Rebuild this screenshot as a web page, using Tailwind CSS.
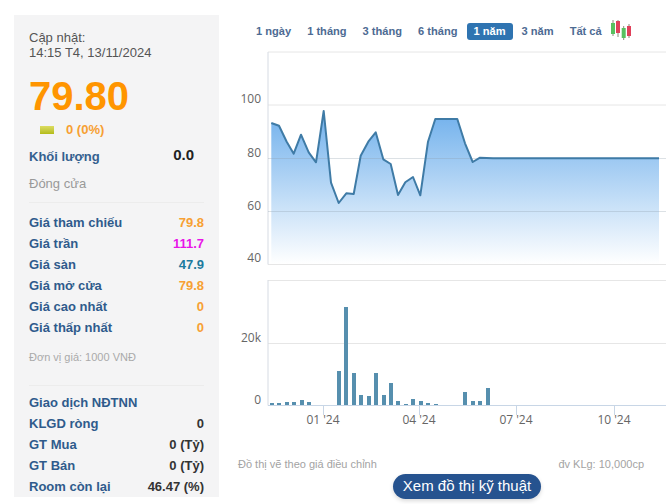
<!DOCTYPE html>
<html lang="vi">
<head>
<meta charset="utf-8">
<script src="https://cdn.jsdelivr.net/npm/@tailwindcss/browser@4"></script>
</head>
<body class="bg-white">
<div class="flex w-[667px] h-[504px] overflow-hidden bg-white font-['Liberation_Sans',Arial,sans-serif]">
  <aside class="ml-[14px] mt-[15px] w-[205px] h-[482px] shrink-0 bg-[#f4f4f5] px-[15px] pt-[15px]">
    <div class="text-[13px] leading-[15px] text-[#555]">Cập nhật:<br>14:15 T4, 13/11/2024</div>
    <div class="mt-[13px] text-[40px] leading-[46px] font-bold text-[#ff9500]">79.80</div>
    <div class="flex items-center h-[18px] mt-[2px] pl-[11px] gap-[12px]">
      <span class="block w-[14px] h-[8px] bg-gradient-to-b from-[#dcdc60] to-[#b4bc14]"></span>
      <span class="text-[13px] font-bold text-[#f7a033]">0 (0%)</span>
    </div>
    <div class="flex justify-between items-center h-[24px] mt-[6px] pr-[10px]">
      <span class="text-[13px] font-bold text-[#34608f]">Khối lượng</span>
      <span class="text-[15px] font-bold text-[#222] -mt-[3px]">0.0</span>
    </div>
    <div class="mt-[5px] text-[13px] leading-[20px] text-[#999]">Đóng cửa</div>
    <div class="mt-[8px] border-t border-[#ececec] pt-[9px] text-[13px] font-bold text-[#2f5b8c]">
      <div class="flex justify-between h-[21px] items-center"><span>Giá tham chiếu</span><span class="text-[#f7a033]">79.8</span></div>
      <div class="flex justify-between h-[21px] items-center"><span>Giá trần</span><span class="text-[#e815e8]">111.7</span></div>
      <div class="flex justify-between h-[21px] items-center"><span>Giá sàn</span><span class="text-[#1c7a9e]">47.9</span></div>
      <div class="flex justify-between h-[21px] items-center"><span>Giá mở cửa</span><span class="text-[#f7a033]">79.8</span></div>
      <div class="flex justify-between h-[21px] items-center"><span>Giá cao nhất</span><span class="text-[#f7a033]">0</span></div>
      <div class="flex justify-between h-[21px] items-center"><span>Giá thấp nhất</span><span class="text-[#f7a033]">0</span></div>
    </div>
    <div class="mt-[12px] text-[11px] leading-[14px] text-[#aaa]">Đơn vị giá: 1000 VNĐ</div>
    <div class="mt-[21px] border-t border-[#ececec] pt-[6px] text-[13px] font-bold text-[#2f5b8c]">
      <div class="flex justify-between h-[21px] items-center"><span>Giao dịch NĐTNN</span></div>
      <div class="flex justify-between h-[21px] items-center"><span>KLGD ròng</span><span class="text-[#333]">0</span></div>
      <div class="flex justify-between h-[21px] items-center"><span>GT Mua</span><span class="text-[#333]">0 (Tỷ)</span></div>
      <div class="flex justify-between h-[21px] items-center"><span>GT Bán</span><span class="text-[#333]">0 (Tỷ)</span></div>
      <div class="flex justify-between h-[21px] items-center"><span>Room còn lại</span><span class="text-[#333]">46.47 (%)</span></div>
    </div>
  </aside>
  <main class="flex-1 flex flex-col min-w-0">
    <nav class="flex items-center h-[17px] mt-[23px] ml-[30px] text-[11.1px] font-bold text-[#4d6b93]">
      <span class="px-[7px]">1 ngày</span>
      <span class="ml-[2px] px-[7px]">1 tháng</span>
      <span class="ml-[2px] px-[7px]">3 tháng</span>
      <span class="ml-[2px] px-[7px]">6 tháng</span>
      <span class="ml-[2px] px-[7px] h-[17px] leading-[17px] rounded-[3px] bg-[#2f74b1] text-white">1 năm</span>
      <span class="ml-[2px] px-[7px]">3 năm</span>
      <span class="ml-[2px] px-[7px]">Tất cả</span>
      <svg class="ml-[2px] -mt-[4px]" width="22" height="22" viewBox="0 0 22 22">
        <path d="M2 1v16M7 1v17M12.700 7v14M18 5v14" stroke="#8a8a7a" stroke-width="1"/>
        <rect x="0" y="4" width="4" height="11" fill="#58c060"/>
        <rect x="5" y="2" width="4" height="12" fill="#e0405a"/>
        <rect x="10.700" y="9" width="4" height="10" fill="#58c060"/>
        <rect x="16" y="7" width="4" height="10" fill="#e0405a"/>
      </svg>
    </nav>
    <svg class="block mt-[6px]" width="448" height="384" viewBox="219 46 448 384" font-family="'Open Sans',sans-serif" font-size="12" fill="#666">
      <defs>
        <linearGradient id="fill" x1="0" y1="111" x2="0" y2="264" gradientUnits="userSpaceOnUse">
          <stop offset="0" stop-color="#70b0ec"/>
          <stop offset="1" stop-color="#ffffff"/>
        </linearGradient>
      </defs>
      <path d="M268 52H666M268 105H666M268 264.500H666M268 280.500H666M268 343.500H666" stroke="#e6e6e6" fill="none"/>
      <path d="M268 52V264.500M268 280V405.500" stroke="#d6dbe3" fill="none"/>
      <path d="M268 405.500H666" stroke="#c8d6e6" fill="none"/>
      <path d="M271.300 123L279 125.700L286.700 141.700L293.700 153.700L301 134.700L308.700 152.300L316 162.300L323.700 111L331 182.700L338.700 203L346.300 193.300L353.700 194L360.700 155.700L368.300 141.700L375.700 132.300L383.300 159.300L390.700 164L398 195L405.300 182.300L413 177L420.300 195.300L428 141.700L435.300 119L457.300 119L465 143.300L472.700 162L480 157.700L493 158.300L659 158.300V264H271.300Z" fill="url(#fill)"/>
      <path d="M268 158.500H666M268 211.500H666" stroke="#8a9aaa" stroke-opacity="0.3" fill="none"/>
      <path d="M271.300 123L279 125.700L286.700 141.700L293.700 153.700L301 134.700L308.700 152.300L316 162.300L323.700 111L331 182.700L338.700 203L346.300 193.300L353.700 194L360.700 155.700L368.300 141.700L375.700 132.300L383.300 159.300L390.700 164L398 195L405.300 182.300L413 177L420.300 195.300L428 141.700L435.300 119L457.300 119L465 143.300L472.700 162L480 157.700L493 158.300L659 158.300" stroke="#3f7ba6" stroke-width="2" fill="none" stroke-linejoin="round"/>
      <g fill="#568fae">
        <rect x="270" y="403" width="4" height="2"/><rect x="277" y="403" width="4" height="2"/><rect x="285" y="402" width="4" height="3"/><rect x="292" y="402" width="4" height="3"/><rect x="300" y="400" width="4" height="5"/><rect x="307" y="402" width="4" height="3"/>
        <rect x="337" y="371" width="4" height="34"/><rect x="344" y="307" width="4" height="98"/><rect x="352" y="373" width="4" height="32"/><rect x="359" y="395" width="4" height="10"/><rect x="367" y="396" width="4" height="9"/><rect x="374" y="373" width="4" height="32"/><rect x="382" y="395" width="4" height="10"/><rect x="389" y="383" width="4" height="22"/><rect x="396" y="401" width="4" height="4"/><rect x="404" y="404" width="4" height="1"/><rect x="411" y="399" width="4" height="6"/><rect x="419" y="401" width="4" height="4"/><rect x="426" y="403" width="4" height="2"/><rect x="434" y="404" width="4" height="1"/>
        <rect x="463" y="392" width="4" height="13"/><rect x="471" y="401" width="4" height="4"/><rect x="478" y="401" width="4" height="4"/><rect x="486" y="388" width="4" height="17"/>
      </g>
      <path d="M323.500 405V415M419.500 405V415M516.500 405V415M614.500 405V415" stroke="#c8d6e6" fill="none"/>
      <g text-anchor="end">
        <text x="261" y="103">100</text><text x="261" y="157">80</text><text x="261" y="210">60</text><text x="261" y="262">40</text>
        <text x="261" y="342">20k</text><text x="261" y="404">0</text>
      </g>
      <g text-anchor="middle">
        <text x="323" y="424">01 '24</text><text x="419" y="424">04 '24</text><text x="516" y="424">07 '24</text><text x="614" y="424">10 '24</text>
      </g>
    </svg>
    <div class="flex justify-between mt-[27px] ml-[19px] mr-[23px] text-[11px] leading-[14px] text-[#a3a3a3]">
      <span>Đồ thị vẽ theo giá điều chỉnh</span>
      <span>đv KLg: 10,000cp</span>
    </div>
    <div class="flex justify-center mt-[3px] ml-[48px]">
      <span class="flex items-center justify-center w-[148px] h-[25px] rounded-full bg-[#26538f] text-white text-[15px] shadow-[0_2px_4px_rgba(0,0,0,0.15)]">Xem đồ thị kỹ thuật</span>
    </div>
  </main>
</div>
</body>
</html>
